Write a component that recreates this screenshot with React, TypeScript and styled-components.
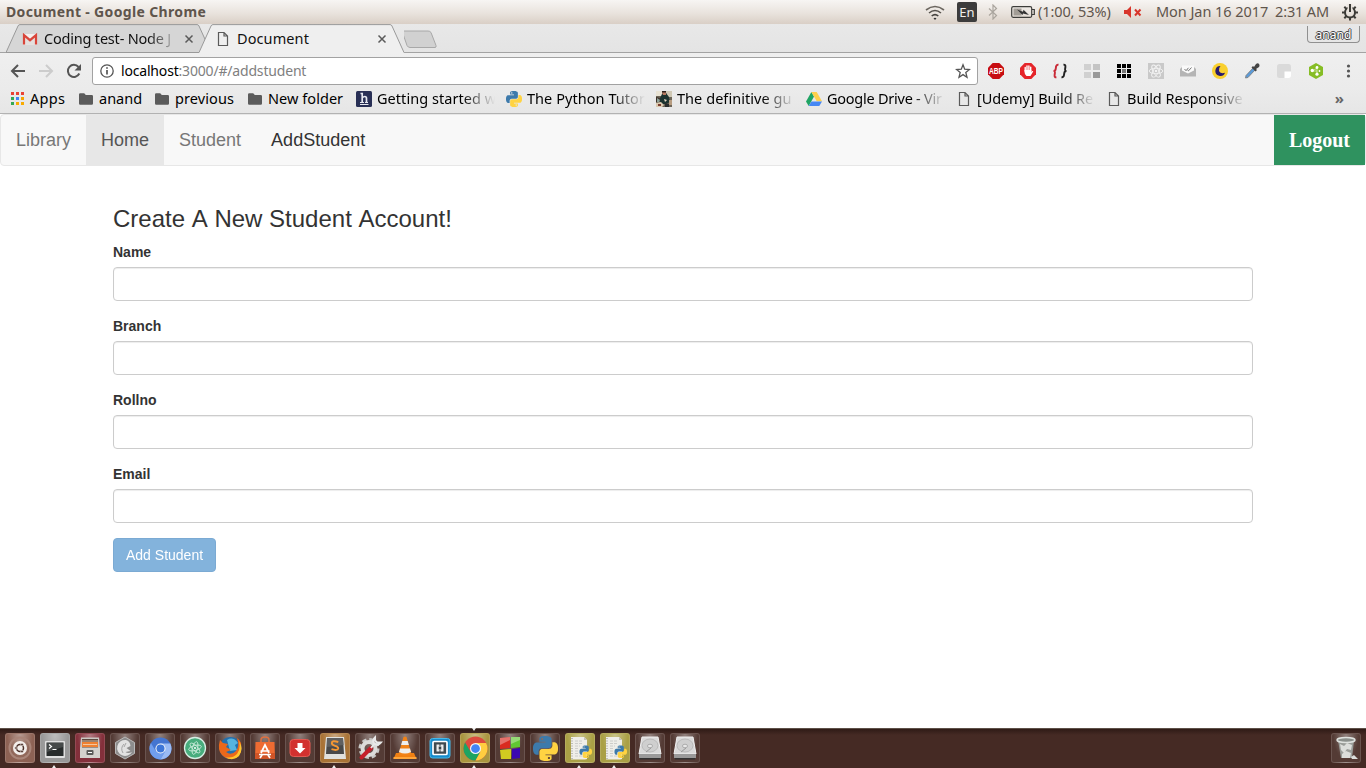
import React from "react";
import styled, { createGlobalStyle, css } from "styled-components";

const Global = createGlobalStyle`
  * { box-sizing: border-box; }
  body { margin: 0; background: #fff; overflow: hidden; }
  svg { display: block; flex: none; }
`;

const uiFont = `"Noto Sans", "Open Sans", sans-serif`;
const webFont = `"Liberation Sans", Arial, sans-serif`;

const Desktop = styled.div`
  width: 1366px;
  height: 768px;
  display: flex;
  flex-direction: column;
  font-family: ${uiFont};
  font-size: 14.5px;
  white-space: nowrap;
`;

/* ---------- system panel ---------- */

const Panel = styled.header`
  height: 24px;
  flex: none;
  display: flex;
  align-items: center;
  padding: 0 7px 0 6px;
  background: linear-gradient(#f7f5f3, #e9e3dd 55%, #d9cfc6);
  color: #5f554c;
  line-height: 24px;
`;
const WindowTitle = styled.div`
  font-weight: 700;
  font-size: 14px;
  letter-spacing: 0.35px;
  flex: 1;
`;
const Indicators = styled.div`
  display: flex;
  align-items: center;
`;
const Indicator = styled.div<{ $gap?: number; $spacing?: number; $w?: number }>`
  display: flex;
  align-items: center;
  margin-left: ${(p) => p.$gap ?? 0}px;
  letter-spacing: ${(p) => p.$spacing ?? 0}px;
  ${(p) => p.$w && css`width: ${p.$w}px; padding-bottom: 2px;`}
`;
const Keyboard = styled.div`
  width: 20px;
  height: 20px;
  margin-left: 12px;
  border-radius: 2px;
  background: #3c3c3c;
  color: #f2efeb;
  font-size: 13px;
  line-height: 20px;
  text-align: center;
`;

/* ---------- tab strip ---------- */

const TabStrip = styled.div`
  height: 29px;
  flex: none;
  display: flex;
  padding-left: 6px;
  background: linear-gradient(#e8e8e8, #e4e4e4);
  box-shadow: inset 0 -1px #a3a3a3;
`;
const TabBox = styled.div<{ $active?: boolean }>`
  position: relative;
  width: 205px;
  height: 29px;
  display: flex;
  align-items: center;
  padding: 1px 13px 0 16px;
  color: #111;
  flex: none;
  ${(p) => p.$active && css`margin-left: -12px; z-index: 1;`}
`;
const TabShape = styled.svg`
  position: absolute;
  left: 0;
  top: 0;
`;
const TabLabel = styled.span<{ $fade?: boolean }>`
  position: relative;
  width: 137px;
  margin-left: 6px;
  line-height: 20px;
  padding-bottom: 2px;
  letter-spacing: ${(p) => (p.$fade ? "-0.2px" : "0.1px")};
  ${(p) => p.$fade && css`mask-image: linear-gradient(90deg, #000 76%, transparent 98%);`}
`;
const TabIcon = styled.span`
  position: relative;
  flex: none;
`;
const Profile = styled.div`
  width: 53px;
  height: 17px;
  margin: 2px 6px 0 auto;
  border: 1px solid #909090;
  border-top: 0;
  border-radius: 0 0 4px 4px;
  font-size: 12px;
  letter-spacing: 0.1px;
  line-height: 18px;
  text-align: center;
  color: #fff;
  text-shadow: 1px 0 #444, -1px 0 #444, 0 1px #444, 0 -1px #444;
`;

/* ---------- toolbar and bookmarks ---------- */

const Toolbar = styled.div`
  height: 36px;
  flex: none;
  display: flex;
  align-items: center;
  padding-left: 10px;
  background: linear-gradient(#efefef, #ebebeb);
`;
const NavButtons = styled.div`
  width: 82px;
  display: flex;
  gap: 12px;
`;
const Omnibox = styled.div`
  width: 886px;
  height: 28px;
  display: flex;
  align-items: center;
  padding: 0 6px;
  border: 1px solid #a2a2a2;
  border-radius: 3px;
  background: #fff;
`;
const Url = styled.div`
  flex: 1;
  margin-left: 6px;
  padding-bottom: 2px;
  font-size: 14px;
  letter-spacing: -0.18px;
  color: #808080;
  b { font-weight: 400; color: #000; }
`;
const Extensions = styled.div`
  display: flex;
  gap: 16px;
  margin-left: 10px;
`;
const Bookmarks = styled.div`
  height: 25px;
  flex: none;
  display: flex;
  padding: 0 0 5px 9px;
  align-items: center;
  background: linear-gradient(#ebebeb, #e6e6e6);
  border-bottom: 1px solid #b2b2b2;
  color: #000;
`;
const Bookmark = styled.div<{ $w: number }>`
  width: ${(p) => p.$w}px;
  flex: none;
  display: flex;
  align-items: center;
  gap: 5px;
  line-height: 20px;
`;
const BookmarkText = styled.span<{ $fade?: boolean; $spacing?: number }>`
  letter-spacing: ${(p) => p.$spacing ?? 0}px;
  padding-bottom: 2px;
  ${(p) =>
    p.$fade &&
    css`
      width: 118px;
      mask-image: linear-gradient(90deg, #000 72%, transparent);
    `}
`;
const Overflow = styled.div`
  margin: 0 22px 0 auto;
  padding-bottom: 2px;
  font-weight: 700;
  font-size: 15px;
  line-height: 18px;
  color: #666;
`;

/* ---------- web page ---------- */

const Page = styled.main`
  flex: 1;
  min-height: 0;
  background: #fff;
  font-family: ${webFont};
  color: #333;
`;
const Navbar = styled.nav`
  height: 52px;
  display: flex;
  border: 1px solid #e7e7e7;
  border-radius: 4px;
  background: #f8f8f8;
`;
const NavLink = styled.a<{ $active?: boolean; $dark?: boolean }>`
  padding: 15px;
  font-size: 18px;
  line-height: 20px;
  color: ${(p) => (p.$active ? "#555" : p.$dark ? "#333" : "#777")};
  background: ${(p) => (p.$active ? "#e7e7e7" : "transparent")};
`;
const Logout = styled.a`
  margin-left: auto;
  padding: 15px;
  background: #2f925f;
  color: #fff;
  font: bold 20px/20px "Liberation Serif", serif;
`;
const Form = styled.form`
  width: 1140px;
  margin: 40px 0 0 113px;
  font-size: 14px;
`;
const Heading = styled.h3`
  margin: 0 0 10px;
  font-size: 24px;
  font-weight: 400;
  font-kerning: none;
  line-height: 26px;
`;
const Field = styled.div`
  height: 74px;
`;
const Label = styled.label`
  display: block;
  margin-bottom: 5px;
  font-weight: 700;
  line-height: 20px;
`;
const Input = styled.input`
  display: block;
  width: 100%;
  height: 34px;
  padding: 6px 12px;
  border: 1px solid #ccc;
  border-radius: 4px;
  background: #fff;
  box-shadow: inset 0 1px 1px rgba(0, 0, 0, 0.075);
`;
const Submit = styled.button`
  display: block;
  height: 34px;
  padding: 6px 12px;
  border: 1px solid #357ebd;
  border-radius: 4px;
  background: #428bca;
  color: #fff;
  font: 14px/20px ${webFont};
  opacity: 0.65;
`;

/* ---------- launcher ---------- */

const Launcher = styled.footer`
  height: 40px;
  flex: none;
  display: flex;
  gap: 5px;
  padding: 4px 5px 0;
  border-top: 1px solid #5d5048;
  background: linear-gradient(#2f1b16, #452a24 6px, #452a24);
`;
const Tile = styled.div<{ $bg?: string; $end?: boolean }>`
  position: relative;
  width: 30px;
  height: 30px;
  display: flex;
  align-items: center;
  justify-content: center;
  border-radius: 3px;
  border: 1px solid rgba(255, 255, 255, 0.13);
  background: radial-gradient(ellipse at 50% 0, rgba(255, 255, 255, 0.36), transparent 65%),
    ${(p) => p.$bg ?? "#543b35"};
  ${(p) => p.$end && css`margin-left: auto;`}
`;
const Marker = styled.i<{ $top?: boolean }>`
  position: absolute;
  left: 11px;
  border: 2.5px solid transparent;
  ${(p) =>
    p.$top
      ? css`top: -6px; border-top: 3px solid #eee; border-bottom: 0;`
      : css`bottom: -6px; border-bottom: 3px solid #eee; border-top: 0;`}
`;

/* ---------- drawings ---------- */

const Icon = ({ size = 16, box = "0 0 16 16", children }: { size?: number; box?: string; children: React.ReactNode }) => (
  <svg width={size} height={size} viewBox={box} fill="none">{children}</svg>
);

const PY =
  "M14.25.18l.9.2.73.26.59.3.45.32.34.34.25.34.16.33.1.3.04.26.02.2-.01.13V8.5l-.05.63-.13.55-.21.46-.26.38-.3.31-.33.25-.35.19-.35.14-.33.1-.3.07-.26.04-.21.02H8.77l-.69.05-.59.14-.5.22-.41.27-.33.32-.27.35-.2.36-.15.37-.1.35-.07.32-.04.27-.02.21v3.06H3.17l-.21-.03-.28-.07-.32-.12-.35-.18-.36-.26-.36-.36-.35-.46-.32-.59-.28-.73-.21-.88-.14-1.05-.05-1.23.06-1.22.16-1.04.24-.87.32-.71.36-.57.4-.44.42-.33.42-.24.4-.16.36-.1.32-.05.24-.01h.16l.06.01h8.16v-.83H6.18l-.01-2.75-.02-.37.05-.34.11-.31.17-.28.25-.26.31-.23.38-.2.44-.18.51-.15.58-.12.64-.1.71-.06.77-.04.84-.02 1.27.05zm-6.3 1.98l-.23.33-.08.41.08.41.23.34.33.22.41.09.41-.09.33-.22.23-.34.08-.41-.08-.41-.23-.33-.33-.22-.41-.09-.41.09z";

const PythonMark = () => (
  <>
    <path d={PY} fill="#3d7aab" />
    <path d={PY} fill="#ffd342" transform="rotate(180 12 12)" />
  </>
);
const Python = ({ size = 16 }: { size?: number }) => <Icon size={size} box="0 0 24 24"><PythonMark /></Icon>;

const PageIcon = () => (
  <Icon>
    <path d="M3.5 1.5h5.500L12.500 5v9.500H3.500zM9 1.500V5h3.500" stroke="#5a5a5a" strokeWidth="1.200" />
  </Icon>
);
const Folder = () => (
  <Icon><path d="M1 3.500Q1 2.300 2.200 2.300h4l1.600 1.800h6Q15 4.100 15 5.300v7.200q0 1.300-1.200 1.300H2.200Q1 13.800 1 12.500z" fill="#5b5b5b" /></Icon>
);
const AppsGrid = () => (
  <Icon>
    {["#ea4335", "#ea4335", "#ea4335", "#34a853", "#4285f4", "#f4a400", "#34a853", "#f9ab00", "#f9ab00"].map((c, i) => (
      <rect key={i} x={2 + (i % 3) * 5} y={1 + Math.floor(i / 3) * 5} width="3" height="3" fill={c} />
    ))}
  </Icon>
);
const Harvard = () => (
  <Icon>
    <rect width="16" height="16" rx="1.500" fill="#282f55" />
    <path d="M4.500 2.500H6.200V11M6.200 6.800Q7.500 5.500 8.800 5.500 10.500 5.500 10.500 7.500V11" stroke="#e6e8f0" strokeWidth="1.700" />
    <path d="M4 11.500h4M9 11.500h3M4 13.500h8.500" stroke="#e6e8f0" strokeWidth="1" />
  </Icon>
);
const Photo = () => (
  <Icon>
    <rect width="16" height="16" fill="#6d6557" />
    <path d="M0 0h6v5H0z" fill="#e9e3d4" /><path d="M9 0h7v6h-4z" fill="#cfc8b4" />
    <path d="M6 3l4-1 3 4 1 5-4 2H5L3 9z" fill="#1c332f" />
    <path d="M6 1h4v3H7z" fill="#b87a60" /><path d="M6 0h4v1.500H6z" fill="#2b211c" />
    <path d="M0 6l4 1-1 4H0z" fill="#3b2f28" /><path d="M1 7l3 2-1 2H1z" fill="#8fa39a" />
    <path d="M8 8l3 1-2 2z" fill="#e6d6c4" /><path d="M0 12l5-1 3 3-2 2H0z" fill="#dbc9af" />
    <path d="M2 13h3v2H2z" fill="#7a3b2e" /><path d="M9 12l4 1v3H9z" fill="#2a2d2c" /><path d="M13 9h3v5h-3z" fill="#b79c80" />
  </Icon>
);
const Drive = () => (
  <Icon>
    <path d="M5.400 1L0 10.400l2.700 4.500L8 5.600z" fill="#1fa463" />
    <path d="M5.400 1h5.300L16 10.200h-5.300z" fill="#ffd04b" />
    <path d="M5.400 10.400H16l-2.700 4.500H2.800z" fill="#4687f4" />
  </Icon>
);
const Close = () => (
  <Icon><path d="M4.500 4.500l7 7M11.500 4.500l-7 7" stroke="#5a5a5a" strokeWidth="1.500" /></Icon>
);
const Gmail = () => (
  <Icon>
    <path d="M1 3h14v10.500H1z" fill="#f3efee" />
    <path d="M3 13.500V6l5 4 5-4v7.500" fill="#e4dfdd" />
    <path d="M2 13.600V4.200l6 5 6-5v9.400" stroke="#d9453a" strokeWidth="2.200" />
  </Icon>
);

const Tab = ({ active, icon, children }: { active?: boolean; icon: React.ReactNode; children: string }) => (
  <TabBox $active={active}>
    <TabShape width="205" height="29" viewBox="0 0 205 29" fill="none">
      <path d="M0 28.500L12 2Q12.600 .6 14 .6H191Q192.400 .6 193 2L205 28.500V29H0z" fill={active ? "#efefef" : "#d6d6d6"} />
      <path d="M0 28.500L12 2Q12.600 .6 14 .6H191Q192.400 .6 193 2L205 28.500" stroke="#999" />
      {!active && <path d="M0 28.500H205" stroke="#999" />}
    </TabShape>
    <TabIcon>{icon}</TabIcon>
    <TabLabel $fade={!active}>{children}</TabLabel>
    <TabIcon><Close /></TabIcon>
  </TabBox>
);

const extensionIcons: React.ReactNode[] = [
  <>
    <path d="M4.700 0h6.600L16 4.700v6.600L11.300 16H4.700L0 11.300V4.700z" fill="#c70d12" />
    <text x="8" y="11" fontSize="8.500" fontWeight="700" fill="#fff" textAnchor="middle" fontFamily="Liberation Sans" textLength="14" lengthAdjust="spacingAndGlyphs">ABP</text>
  </>,
  <>
    <path d="M4.700 0h6.600L16 4.700v6.600L11.300 16H4.700L0 11.300V4.700z" fill="#e5252a" />
    <path d="M5.200 8V4.500M7 7.500V3M8.900 7.500V3M10.700 8V4.300" stroke="#fff" strokeWidth="1.400" strokeLinecap="round" />
    <path d="M4.500 7h6.900v2l1-1q1-.3.800.6L10.500 13H6.500Q4.500 11.500 4.500 9z" fill="#fff" />
  </>,
  <>
    <path d="M6.500 1.800Q4.300 1.500 4 4L3.700 6Q3.400 8 1.500 8 3.200 8 2.900 10L2.600 12q-.3 2.500 1.800 2.300" stroke="#c92b38" strokeWidth="1.900" />
    <path d="M11.500 1.800Q13.700 1.500 13.400 4L13.100 6Q12.800 8 14.500 8 12.600 8 12.300 10L12 12q-.3 2.500-2.500 2.300" stroke="#222" strokeWidth="1.900" />
  </>,
  <>
    <path d="M0 1h7v6H0zM0 9h7v6H0z" fill="#d0d0d0" /><path d="M9 1h7v6H9z" fill="#c4c4c4" /><path d="M9 9h7v6H9z" fill="#999" />
  </>,
  <>
    {[0, 1, 2, 3, 4, 5, 6, 7, 8].map((i) => (
      <rect key={i} x={1 + (i % 3) * 5} y={1 + Math.floor(i / 3) * 5} width="4" height="4" fill={i === 4 ? "#777" : "#000"} />
    ))}
  </>,
  <>
    <path d="M0 0h16v16H0z" fill="#c9c9c9" />
    <g stroke="#f3f3f3" strokeWidth=".9">
      <ellipse cx="8" cy="8" rx="6.800" ry="2.700" />
      <ellipse cx="8" cy="8" rx="6.800" ry="2.700" transform="rotate(60 8 8)" />
      <ellipse cx="8" cy="8" rx="6.800" ry="2.700" transform="rotate(120 8 8)" />
    </g>
    <circle cx="8" cy="8" r="1.300" fill="#f3f3f3" />
  </>,
  <>
    <path d="M0 6L3 3h10l3 3v7.500H0z" fill="#b5b5b5" /><path d="M2 2.500h12v5l-6 3-6-3z" fill="#fafafa" />
    <path d="M4.500 6l1.500 1.700L8.500 4.800M7.500 7l1 .8L11.500 4.500" stroke="#666" strokeWidth=".9" />
  </>,
  <>
    <circle cx="8" cy="8" r="8" fill="#f9d02f" />
    <path d="M8.500 3A5 5 0 1 0 13 9.800Q8 11 7 8 6.500 5 8.500 3z" fill="#281b6d" />
  </>,
  <>
    <path d="M9 5l2 2-7 7.500-2.500.5L2 12.500z" fill="#5b9bd9" stroke="#777" strokeWidth=".8" />
    <path d="M7.500 4.500L9 3l1 1 2-3q2-1.300 3 0t0 3L12 6l1 1-1.500 1.500z" fill="#444" />
  </>,
  <>
    <rect x="1" y="1" width="14" height="14" rx="2.500" fill="#dadada" />
    <path d="M8.500 8.500H15V13q0 2-2 2H8.500z" fill="#fff" />
  </>,
  <>
    <path d="M8 0l7 4v8l-7 4-7-4V4z" fill="#86bd25" />
    <path d="M4.500 8L9 5M9 5v6M4.500 8H9" stroke="#e4f2c5" strokeWidth=".7" />
    <circle cx="4.300" cy="7.500" r="1.700" fill="#fff" /><circle cx="9" cy="4.500" r="1.400" fill="#fff" /><circle cx="9" cy="11.200" r="1.600" fill="#fff" /><circle cx="11.500" cy="8" r=".9" fill="#fff" />
  </>,
];

const Chrome = ({ colors, size = 24 }: { colors: [string, string, string, string]; size?: number }) => (
  <Icon size={size} box="0 0 24 24">
    <circle cx="12" cy="12" r="11.500" fill={colors[0]} />
    <path d="M2 6.300L7.300 15 12 12l4.700 3L12 23.500A11.500 11.500 0 0 1 2 6.300z" fill={colors[1]} />
    <path d="M12 6.700h10.200A11.500 11.500 0 0 1 12 23.500l4.700-8.500L12 12z" fill={colors[2]} />
    <circle cx="12" cy="12" r="5.300" fill="#f4f6f8" /><circle cx="12" cy="12" r="4.200" fill={colors[3]} />
  </Icon>
);
const L = ({ children }: { children: React.ReactNode }) => <Icon size={26} box="0 0 26 26">{children}</Icon>;

const DocScript = () => (
  <L>
    <path d="M4 2h13l3 3v19l-2 .5H4z" fill="#efeee9" /><path d="M17 2v3h3z" fill="#c5c4bd" />
    <path d="M8 6h7M8 8.500h8M8 11h5M8 13.500h4M8 16h3M8 18.500h4M8 21h7" stroke="#c4c4c1" strokeWidth=".8" strokeDasharray="3 1" />
    <path d="M5 3v21" stroke="#8b8b86" strokeDasharray="1 1.500" />
    <g transform="translate(12.500 10.500) scale(.52)"><PythonMark /></g>
  </L>
);
const Disk = () => (
  <L>
    <path d="M5 2h16l3 17H2z" fill="#dadada" stroke="#f0f0f0" />
    <ellipse cx="13" cy="10.500" rx="8" ry="6.500" fill="#cfcfcf" stroke="#b4b4b4" strokeWidth=".8" />
    <ellipse cx="13" cy="11" rx="2.500" ry="1.800" fill="#e8e8e8" stroke="#a0a0a0" strokeWidth=".8" />
    <path d="M14 13l-5 4" stroke="#9a9a9a" /><path d="M2 19h22v4H2z" fill="#9a9a9a" /><path d="M3 23h20v1.500H3z" fill="#333" />
  </L>
);

type App = { bg?: string; running?: boolean; focused?: boolean; icon: React.ReactNode };
const apps: App[] = [
  { bg: "#8d6254", icon: <L>
    <circle cx="13" cy="13" r="10.500" stroke="#a98579" strokeWidth="2" />
    <circle cx="13" cy="13" r="7" fill="#f4efec" /><circle cx="13" cy="13" r="3.500" stroke="#4b3029" strokeWidth="1.500" />
    <circle cx="9" cy="13" r="1.300" fill="#4b3029" stroke="#f4efec" strokeWidth=".6" /><circle cx="15" cy="9.500" r="1.300" fill="#4b3029" stroke="#f4efec" strokeWidth=".6" /><circle cx="15" cy="16.500" r="1.300" fill="#4b3029" stroke="#f4efec" strokeWidth=".6" />
  </L> },
  { bg: "#999", running: true, icon: <L>
    <rect x="3" y="6" width="20" height="17" rx="1" fill="#e0e0e0" /><rect x="4.500" y="7.500" width="17" height="13.500" fill="#282c2c" />
    <path d="M5 8h16v4L5 17z" fill="#464a4a" /><path d="M7 9.500l2.500 2L7 13.500M10.500 14.500h4" stroke="#fff" strokeWidth="1.200" />
  </L> },
  { bg: "#84303b", running: true, icon: <L>
    <path d="M4 2.500h18l1 10.500H3z" fill="#c9c7c2" /><path d="M5 4h16v9H5z" fill="#5e4a40" />
    <path d="M5 7h16v5H5z" fill="#ef8131" /><path d="M5 6h16M6 9.500h14" stroke="#f6d9b9" strokeWidth=".8" /><path d="M3 12.500h20V23H3z" fill="#d4d2cd" />
    <rect x="9.500" y="15" width="7" height="5" rx="1" fill="#5b5b59" /><path d="M11 17.500h4" stroke="#fff" />
  </L> },
  { icon: <L>
    <path d="M13 2l9.500 5.500v11L13 24l-9.500-5.500v-11z" fill="#8d8d8d" stroke="#b9b9b9" />
    <path d="M14 5a8 8 0 1 0 6 12q-4 2-6.500 0l5-1-4-3 4-2q-.5-5-4.500-6z" fill="#e2e2e2" /><path d="M12 9q-4 4-1 9M14 8l-2 4" stroke="#a4a4a4" />
  </L> },
  { icon: <Chrome size={23} colors={["#4475d1", "#709eed", "#9abbf4", "#3d76d8"]} /> },
  { icon: <L>
    <circle cx="13" cy="13" r="10.500" fill="#48ad7d" stroke="#d6eee3" strokeWidth="1.300" />
    <g stroke="#d3f0e1" strokeWidth=".8"><ellipse cx="13" cy="13" rx="6.500" ry="2.500" transform="rotate(-15 13 13)" /><ellipse cx="13" cy="13" rx="6.500" ry="2.500" transform="rotate(45 13 13)" /><ellipse cx="13" cy="13" rx="6.500" ry="2.500" transform="rotate(105 13 13)" /></g>
    <circle cx="13" cy="13" r="1" fill="#fff" />
  </L> },
  { icon: <L>
    <circle cx="13.500" cy="13" r="11" fill="#246fac" /><path d="M10 5q6-4 11 3l-3 2 2 5-7 1z" fill="#56b4df" />
    <path d="M3 5Q0 15 5 20q6 6 14 3 7-4 5-15-2-4-4-5 3 8-1 13-5 5-10 1l5-2-5-3 2-3-5-1z" fill="#ea681b" />
    <path d="M22 6q2 8-2 13-5 5-12 3 8 5 14-1 5-7 0-15z" fill="#ffc52c" />
  </L> },
  { icon: <L>
    <path d="M9 8V5q0-3 4-3t4 3v3" stroke="#e0703f" strokeWidth="1.500" /><path d="M3.500 7h19l.5 17H3z" fill="#ee6b32" /><path d="M3 18h20v6H3z" fill="#cf5427" />
    <path d="M9 18l4-8 4 8M8.500 16h9M7 19.500h12M8 23l2-3M18 23l-2-3" stroke="#fff" strokeWidth="1.700" />
  </L> },
  { icon: <L>
    <rect x="3" y="4.500" width="20" height="17" rx="3.500" fill="#d2312f" stroke="#e15a52" /><path d="M10.500 8h5v5h3L13 18.500 7.500 13h3z" fill="#fff" />
  </L> },
  { bg: "#a97336", running: true, icon: <L>
    <path d="M4 2h18l2 22H2z" fill="#e1e1de" /><path d="M5 3h16l1 16H4z" fill="#494949" /><path d="M5 3h16l.5 7L5 12z" fill="#606060" />
    <path d="M16.300 7Q10 5 9.800 8 9.800 10 13 10.800q3.500.8 3.200 2.700Q15.500 16 9.500 14.200" stroke="#f69833" strokeWidth="1.900" />
  </L> },
  { icon: <L>
    <circle cx="12" cy="13.500" r="9" stroke="#c9c9c7" strokeWidth="3" strokeDasharray="4.200 2.870" /><circle cx="12" cy="13.500" r="6.500" stroke="#dcdcda" strokeWidth="4" />
    <path d="M4.500 22.500L14 13" stroke="#c51e2a" strokeWidth="4" strokeLinecap="round" /><path d="M14 13l4-5M18 2.500q-3 3-1 6 4 3 7-1l-4 0-2-2z" stroke="#e9e9e9" strokeWidth="2" />
  </L> },
  { icon: <L>
    <path d="M4 18h18l2.500 6h-23z" fill="#ef7f12" /><path d="M11.500 2q1.500-1 3 0l5 17q-6.500 3.500-13 0z" fill="#f18218" />
    <path d="M10.300 6h5.400l1.200 4H9.100zM8 13.500h10l1 3.500q-6 3-12 0z" fill="#eee" /><path d="M1.500 22h23v2h-23z" fill="#ffa53a" />
  </L> },
  { icon: <L>
    <rect x="3" y="3.500" width="20" height="19.500" rx="2.500" fill="#168ccc" stroke="#47b9e9" /><rect x="6" y="6.500" width="14" height="13" rx="1" fill="#3f4a50" stroke="#fff" strokeWidth="1.700" />
    <path d="M9.500 9.500h7v7h-7z" fill="#eee" /><path d="M13 8v3M13 15v3" stroke="#394348" /><path d="M11.700 11.500h2.600v3h-2.600z" fill="#394348" />
  </L> },
  { bg: "#aa963f", running: true, focused: true, icon: <Chrome size={25} colors={["#dd4b3e", "#1da462", "#ffcd40", "#4285f4"]} /> },
  { icon: <L>
    <path d="M3 3l10-1v11L3 14z" fill="#d92b20" /><path d="M14 2h9v10l-9 1z" fill="#60c832" /><path d="M3 15l11-1v10H4z" fill="#d1cb20" /><path d="M15 14l8-1v10l-8 1z" fill="#3c08b0" />
    <path d="M3 3l10-1v3L3 10zM14 2h9v3l-9 4z" fill="#ffffff55" />
  </L> },
  { icon: <Python size={25} /> },
  { bg: "#aaa045", running: true, icon: <DocScript /> },
  { bg: "#aaa045", running: true, icon: <DocScript /> },
  { icon: <Disk /> },
  { icon: <Disk /> },
];

const bookmarks: { w: number; text: string; icon: React.ReactNode; fade?: boolean; sp?: number }[] = [
  { w: 69, text: "Apps", icon: <AppsGrid />, sp: 0.3 },
  { w: 76, text: "anand", icon: <Folder /> },
  { w: 93, text: "previous", icon: <Folder />, sp: 0.1 },
  { w: 109, text: "New folder", icon: <Folder />, sp: 0.05 },
  { w: 150, text: "Getting started w", icon: <Harvard />, fade: true, sp: 0.05 },
  { w: 150, text: "The Python Tutor", icon: <Python />, fade: true, sp: 0.05 },
  { w: 150, text: "The definitive gu", icon: <Photo />, fade: true, sp: 0.05 },
  { w: 150, text: "Google Drive - Vir", icon: <Drive />, fade: true, sp: -0.25 },
  { w: 150, text: "[Udemy] Build Re", icon: <PageIcon />, fade: true, sp: -0.1 },
  { w: 150, text: "Build Responsive", icon: <PageIcon />, fade: true },
];

export default function App() {
  return (
    <Desktop>
      <Global />
      <Panel>
        <WindowTitle>Document - Google Chrome</WindowTitle>
        <Indicators>
          <Icon size={20} box="0 0 20 20">
            <path d="M1 8q9-7 18 0" stroke="#6b665f" strokeWidth="1.600" /><path d="M4 11q6-5 12 0" stroke="#55514b" strokeWidth="1.600" />
            <path d="M6.700 14q3.300-2.800 6.600 0" stroke="#45423e" strokeWidth="1.600" /><path d="M8.500 16.200q1.500-1 3 0L10 18z" fill="#333" />
          </Icon>
          <Keyboard>En</Keyboard>
          <Indicator $gap={8}>
            <Icon><path d="M4 4.500l7.500 7L8 15V1l3.500 3.500-7.500 7" stroke="#aaa59e" strokeWidth="1.200" /></Icon>
          </Indicator>
          <Indicator $gap={10}>
            <svg width="24" height="14" viewBox="0 0 24 14" fill="none">
              <rect x=".7" y="1.700" width="20" height="10.600" rx="1.500" stroke="#3d3d3a" strokeWidth="1.200" />
              <path d="M21 4.500h2.300v5H21" stroke="#3d3d3a" strokeWidth="1.200" /><path d="M2.500 3.500h8v7h-8z" fill="#a29d96" />
              <path d="M6 4.500l6 2.300.5-2L18 10l-6-1.500-.5 1.500z" fill="#333" />
            </svg>
          </Indicator>
          <Indicator $gap={3} $w={74} $spacing={-0.1}>(1:00, 53%)</Indicator>
          <Indicator $gap={11}>
            <svg width="19" height="14" viewBox="0 0 19 14" fill="none">
              <path d="M1 5h3l4-4v12L4 9H1z" fill="#d8352b" /><path d="M12 4.500l5.500 6M17.500 4.500L12 10.500" stroke="#d8352b" strokeWidth="2" />
            </svg>
          </Indicator>
          <Indicator $gap={14} $w={119} $spacing={-0.05}>Mon Jan 16 2017</Indicator>
          <Indicator $w={66} $spacing={-0.15}>2:31 AM</Indicator>
          <Icon size={18} box="0 0 18 18">
            <circle cx="9" cy="9.500" r="5" stroke="#3c3b37" strokeWidth="2" />
            <path d="M9 14.500V17.500M4 9.500H1M14 9.500h3M5.500 13L3.300 15.200M12.500 13l2.200 2.200M5.500 6L3.300 3.800M12.500 6l2.200-2.200" stroke="#3c3b37" strokeWidth="2" />
            <path d="M9 1v8" stroke="#e9e3dd" strokeWidth="5" /><path d="M9 1v8" stroke="#3c3b37" strokeWidth="2" />
          </Icon>
        </Indicators>
      </Panel>

      <TabStrip>
        <Tab icon={<Gmail />}>Coding test- Node J</Tab>
        <Tab active icon={<PageIcon />}>Document</Tab>
        <svg width="36" height="29" viewBox="0 0 36 29" fill="none">
          <path d="M0 7.500H24Q26 7.500 27 9L32 22q.5 2-1 2H6Q4 24 3 22L-1.500 9Q-2 7.500 0 7.500z" transform="translate(0 -.500)" fill="#d1d1d1" stroke="#a8a8a8" />
        </svg>
        <Profile>anand</Profile>
      </TabStrip>

      <Toolbar>
        <NavButtons>
          <Icon><path d="M15 8H2.500M8 2L2 8l6 6" stroke="#555" strokeWidth="2" /></Icon>
          <Icon><path d="M1 8h12.500M8 2l6 6-6 6" stroke="#ccc" strokeWidth="2" /></Icon>
          <Icon><path d="M13.300 10.500A6 6 0 1 1 12.500 4" stroke="#555" strokeWidth="2" /><path d="M15 1v6.500H8.500z" fill="#555" /></Icon>
        </NavButtons>
        <Omnibox>
          <Icon><circle cx="8" cy="8" r="6.200" stroke="#555" strokeWidth="1.300" /><path d="M8 7v4.500M8 4.200v1.600" stroke="#555" strokeWidth="1.700" /></Icon>
          <Url><b>localhost</b>:3000/#/addstudent</Url>
          <Icon><path d="M8 1.800l1.700 4.400 4.800.3-3.700 3 1.200 4.700-4-2.600-4 2.600 1.200-4.700-3.700-3 4.800-.3z" stroke="#555" strokeWidth="1.300" /></Icon>
        </Omnibox>
        <Extensions>
          {extensionIcons.map((x, i) => <Icon key={i}>{x}</Icon>)}
          <Icon><circle cx="8.500" cy="3" r="1.600" fill="#555" /><circle cx="8.500" cy="8" r="1.600" fill="#555" /><circle cx="8.500" cy="13" r="1.600" fill="#555" /></Icon>
        </Extensions>
      </Toolbar>

      <Bookmarks>
        {bookmarks.map((b, i) => (
          <Bookmark key={i} $w={b.w}>
            {b.icon}
            <BookmarkText $fade={b.fade} $spacing={b.sp}>{b.text}</BookmarkText>
          </Bookmark>
        ))}
        <Overflow>»</Overflow>
      </Bookmarks>

      <Page>
        <Navbar>
          <NavLink>Library</NavLink>
          <NavLink $active>Home</NavLink>
          <NavLink>Student</NavLink>
          <NavLink $dark>AddStudent</NavLink>
          <Logout>Logout</Logout>
        </Navbar>
        <Form>
          <Heading>Create A New Student Account!</Heading>
          {["Name", "Branch", "Rollno", "Email"].map((name) => (
            <Field key={name}>
              <Label htmlFor={name}>{name}</Label>
              <Input id={name} />
            </Field>
          ))}
          <Submit type="button">Add Student</Submit>
        </Form>
      </Page>

      <Launcher>
        {apps.map((a, i) => (
          <Tile key={i} $bg={a.bg}>
            {a.icon}
            {a.running && <Marker />}
            {a.focused && <Marker $top />}
          </Tile>
        ))}
        <Tile $end>
          <L>
            <path d="M5 5h16l-2 18H8z" fill="#9a9d99" /><ellipse cx="13" cy="5" rx="9" ry="2.500" fill="#8b908c" stroke="#dfe2df" strokeWidth="1.500" />
            <path d="M7 9l4 2 3-3 5 2-1 5-4-1-3 4-3-3zM9 19l4-3 5 2-1 5H9zM18 22l3-2 4 4h-6z" fill="#dcdedb" />
          </L>
        </Tile>
      </Launcher>
    </Desktop>
  );
}
